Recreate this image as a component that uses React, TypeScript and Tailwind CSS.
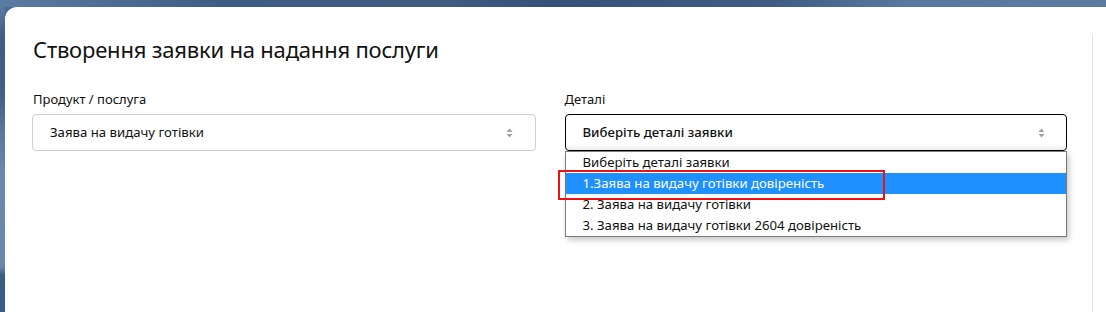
const options = [
  "Виберіть деталі заявки",
  "1.Заява на видачу готівки довіреність",
  "2. Заява на видачу готівки",
  "3. Заява на видачу готівки 2604 довіреність",
];

function Arrows() {
  return (
    <svg width="7" height="10" viewBox="0 0 7 10" className="shrink-0">
      <path d="M3.5 0.5 L6.5 4 H0.5 Z" fill="#9aa3ad" />
      <path d="M3.5 9.5 L6.5 6 H0.5 Z" fill="#9aa3ad" />
    </svg>
  );
}

export default function App() {
  return (
    <div
      className="h-[312px] w-full overflow-hidden flex flex-col bg-[#4a6a92]"
      style={{ fontFamily: '"Noto Sans", "Open Sans", sans-serif' }}
    >
      {/* Desktop backdrop strip on top */}
      <div className="h-[7px] shrink-0 bg-[linear-gradient(90deg,#5a7ca2_0%,#3e5d86_20%,#3f5c82_40%,#33517a_50%,#3f5d84_70%,#587aa0_82%,#5b7ba1_100%)]" />

      <div className="flex-1 flex">
        {/* Left edge of backdrop */}
        <div className="w-[5px] shrink-0 bg-[linear-gradient(180deg,#5a7ba0_0%,#3e5d87_10%,#3f5e88_28%,#56769d_40%,#6a89ab_55%,#6989ab_85%,#3b5c87_88%,#3a5b87_100%)]" />

        <div className="flex-1 bg-white rounded-tl-[12px] flex">
          {/* Main */}
          <div className="flex-1 pl-[28px] pr-[25px] pt-[27px]">
            <h1 className="text-[22px] leading-[30px] text-[#111] tracking-[-0.2px]">
              Створення заявки на надання послуги
            </h1>

            <div className="grid grid-cols-2 gap-x-[29px] mt-[26px]">
              {/* Product */}
              <div>
                <div className="text-[13px] leading-[18px] text-[#111] mb-[6px]">Продукт / послуга</div>
                <div className="h-[37px] -ml-px border border-[#cfcfcf] rounded-[4px] flex items-center justify-between pl-[17px] pr-[22px]">
                  <span className="text-[13.2px] text-[#111]">Заява на видачу готівки</span>
                  <Arrows />
                </div>
              </div>

              {/* Details */}
              <div className="relative">
                <div className="text-[13px] leading-[18px] text-[#111] mb-[6px]">Деталі</div>
                <div className="h-[37px] border border-black rounded-[4px] flex items-center justify-between pl-[17px] pr-[21px] shadow-[inset_0_-6px_8px_-6px_rgba(0,0,0,0.12)]">
                  <span className="text-[13.2px] font-medium text-[#111]">Виберіть деталі заявки</span>
                  <Arrows />
                </div>

                {/* Open dropdown list */}
                <div className="absolute left-0 right-0 top-[61px] bg-white border border-[#7a7a7a] shadow-[2px_3px_6px_rgba(0,0,0,0.22)]">
                  {options.map((o, i) => (
                    <div
                      key={i}
                      className={
                        i === 1
                          ? "h-[21px] leading-[21px] pl-[17px] text-[13.2px] bg-[#1e90ff] text-white"
                          : "h-[21px] leading-[21px] pl-[17px] text-[13.2px] text-[#111]"
                      }
                    >
                      {o}
                    </div>
                  ))}
                </div>

                {/* Annotation */}
                <div className="absolute left-[-7px] top-[80px] w-[327px] h-[30px] border-2 border-[#ee1111]" />
              </div>
            </div>
          </div>

          {/* Scroll gutter */}
          <div className="w-[14px] mt-[28px] border-l border-[#e2e2e2]" />
        </div>
      </div>
    </div>
  );
}
